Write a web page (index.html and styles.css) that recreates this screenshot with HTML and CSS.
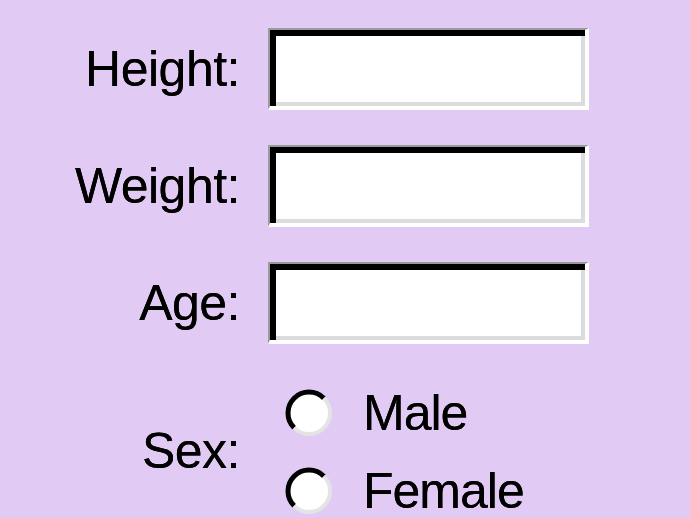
FILE: index.html
```html
<!DOCTYPE html>
<html>
<head>
<meta charset="utf-8">
<link rel="stylesheet" href="styles.css">
</head>
<body>
<form class="form">
  <div class="row">
    <label class="label" for="h">Height:</label>
    <input class="field" id="h" type="text">
  </div>
  <div class="row">
    <label class="label" for="w">Weight:</label>
    <input class="field" id="w" type="text">
  </div>
  <div class="row">
    <label class="label" for="a">Age:</label>
    <input class="field" id="a" type="text">
  </div>
  <div class="row sex-row">
    <span class="label">Sex:</span>
    <div class="options">
      <label class="option">
        <svg class="radio" width="48" height="48" viewBox="0 0 48 48">
          <circle cx="24" cy="24" r="21" fill="#fff"/>
          <path d="M9.15 38.85 A21 21 0 0 1 38.85 9.15" fill="none" stroke="#000" stroke-width="5"/>
          <path d="M38.85 9.15 A21 21 0 0 1 9.15 38.85" fill="none" stroke="#e4e4e4" stroke-width="4"/>
        </svg>
        <span class="opt-text">Male</span>
      </label>
      <label class="option">
        <svg class="radio" width="48" height="48" viewBox="0 0 48 48">
          <circle cx="24" cy="24" r="21" fill="#fff"/>
          <path d="M9.15 38.85 A21 21 0 0 1 38.85 9.15" fill="none" stroke="#000" stroke-width="5"/>
          <path d="M38.85 9.15 A21 21 0 0 1 9.15 38.85" fill="none" stroke="#e4e4e4" stroke-width="4"/>
        </svg>
        <span class="opt-text">Female</span>
      </label>
    </div>
  </div>
</form>
</body>
</html>
```

FILE: styles.css
```css
html, body {
  margin: 0;
  padding: 0;
  background: #e1cbf4;
  overflow: hidden;
}

body {
  font-family: "Liberation Sans", Arial, sans-serif;
  font-size: 50px;
  line-height: 1;
  color: #000;
}

.form {
  display: flex;
  flex-direction: column;
  gap: 35px;
  padding-top: 28px;
}

.row {
  display: grid;
  grid-template-columns: 240px 321px;
  column-gap: 28px;
  align-items: center;
  height: 82px;
}

.label {
  text-align: right;
  letter-spacing: -0.5px;
  text-shadow: 0 0 0.6px #000;
}

.field {
  box-sizing: border-box;
  width: 321px;
  height: 82px;
  margin: 0;
  padding: 0;
  background: #fff;
  border-style: solid;
  border-width: 2px 4px 4px 2px;
  border-color: #9a9a9a #ffffff #ffffff #9a9a9a;
  box-shadow: inset 6px 6px 0 0 #000, inset -4px -4px 0 0 #dcdcdc;
  outline: none;
}

.sex-row {
  height: 156px;
  margin-top: -7px;
}

.options {
  display: flex;
  flex-direction: column;
  padding-top: 2px;
}

.option {
  display: flex;
  align-items: center;
  height: 78px;
  gap: 30px;
  padding-left: 17px;
}

.radio {
  display: block;
  flex: none;
}

.opt-text {
  letter-spacing: -1px;
  text-shadow: 0 0 0.6px #000;
}
```
